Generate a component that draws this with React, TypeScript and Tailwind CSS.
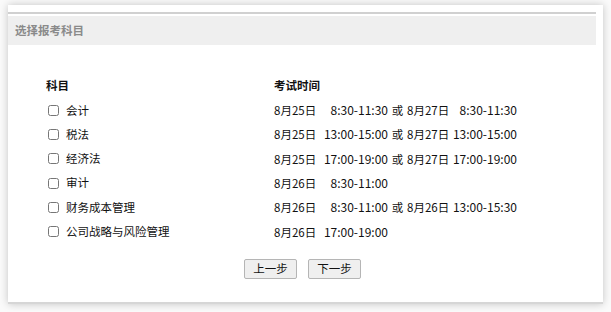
type Slot = { date: string; time: string };

const subjects: { name: string; slots: Slot[] }[] = [
  { name: "会计", slots: [{ date: "8月25日", time: "8:30-11:30" }, { date: "8月27日", time: "8:30-11:30" }] },
  { name: "税法", slots: [{ date: "8月25日", time: "13:00-15:00" }, { date: "8月27日", time: "13:00-15:00" }] },
  { name: "经济法", slots: [{ date: "8月25日", time: "17:00-19:00" }, { date: "8月27日", time: "17:00-19:00" }] },
  { name: "审计", slots: [{ date: "8月26日", time: "8:30-11:00" }] },
  { name: "财务成本管理", slots: [{ date: "8月26日", time: "8:30-11:00" }, { date: "8月26日", time: "13:00-15:30" }] },
  { name: "公司战略与风险管理", slots: [{ date: "8月26日", time: "17:00-19:00" }] },
];

function TimeSlot({ slot, first }: { slot: Slot; first: boolean }) {
  return (
    <>
      <span className="inline-block w-[41px]">{slot.date}</span>
      <span className={`inline-block text-right text-[12px] ${first ? "w-[73px]" : "w-[69px]"}`}>{slot.time}</span>
    </>
  );
}

export default function App() {
  return (
    <div
      className="w-[611px] h-[312px] bg-[#fafafa] pl-[8px] pt-[5px] overflow-hidden"
      style={{ fontFamily: '"Noto Sans CJK SC", sans-serif' }}
    >
      <div className="w-[595px] h-[299px] bg-white border-b-2 border-[#d6d6d6] shadow-[0_0_8px_rgba(0,0,0,0.22)] pt-[7px] pr-[7px]">
        <div className="border-t-2 border-[#d0d0d0]" />
        <div className="mt-[2px] h-[29px] bg-[#efefef] flex items-center pl-[7px] text-[11.5px] font-bold text-[#8a8a8a]">
          选择报考科目
        </div>

        <div className="pl-[38px] pt-[31px] text-[11.5px] text-[#111]">
          <div className="flex h-[20px] items-center font-bold">
            <div className="w-[228px]">科目</div>
            <div>考试时间</div>
          </div>
          <div className="pt-[2px]">
            {subjects.map((s) => (
              <div key={s.name} className="flex h-[24.3px] items-center">
                <label className="w-[228px] flex items-center gap-[7px] pl-[2px]">
                  <input type="checkbox" className="w-[11px] h-[11px] m-0 accent-[#666]" />
                  <span>{s.name}</span>
                </label>
                <div className="whitespace-nowrap">
                  <TimeSlot slot={s.slots[0]} first />
                  {s.slots[1] && (
                    <>
                      <span className="inline-block w-[19px] text-center">或</span>
                      <TimeSlot slot={s.slots[1]} first={false} />
                    </>
                  )}
                </div>
              </div>
            ))}
          </div>
          <div className="flex gap-[11px] ml-[198px] mt-[15px]">
            <button className="w-[53px] h-[20px] border border-[#b5b5b5] bg-[#efefef] rounded-[2px] text-[11.5px] text-[#111]">
              上一步
            </button>
            <button className="w-[53px] h-[20px] border border-[#b5b5b5] bg-[#efefef] rounded-[2px] text-[11.5px] text-[#111]">
              下一步
            </button>
          </div>
        </div>
      </div>
    </div>
  );
}
